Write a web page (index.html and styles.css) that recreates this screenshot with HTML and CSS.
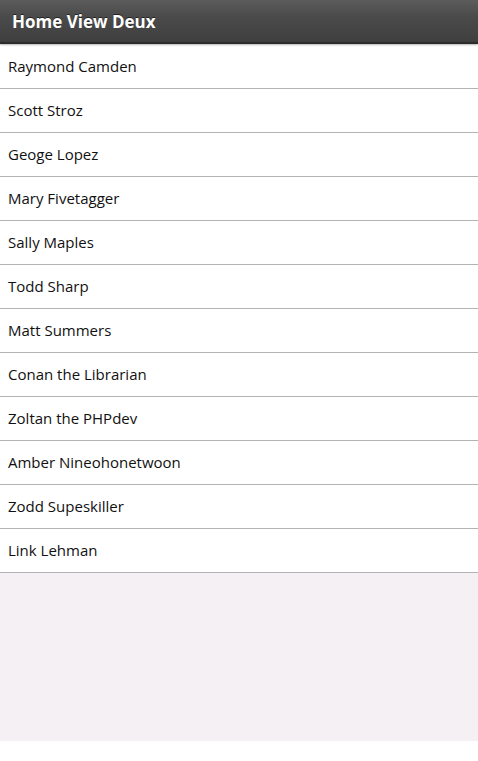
FILE: index.html
```html
<!DOCTYPE html>
<html>
<head>
<meta charset="utf-8">
<link rel="stylesheet" href="styles.css">
</head>
<body>
<div class="page">
  <header class="bar"><h1 class="title">Home View Deux</h1></header>
  <ul class="list">
    <li class="item">Raymond Camden</li>
    <li class="item">Scott Stroz</li>
    <li class="item">Geoge Lopez</li>
    <li class="item">Mary Fivetagger</li>
    <li class="item">Sally Maples</li>
    <li class="item">Todd Sharp</li>
    <li class="item">Matt Summers</li>
    <li class="item">Conan the Librarian</li>
    <li class="item">Zoltan the PHPdev</li>
    <li class="item">Amber Nineohonetwoon</li>
    <li class="item">Zodd Supeskiller</li>
    <li class="item">Link Lehman</li>
  </ul>
</div>
</body>
</html>
```
FILE: styles.css
```css
html, body {
  margin: 0;
  padding: 0;
  background: #ffffff;
}
.page {
  height: 741px;
  background: #f5f0f3;
  font-family: "Open Sans", "DejaVu Sans", sans-serif;
}
.bar {
  height: 42px;
  background: linear-gradient(#5c5c5c 0%, #4a4a4a 40%, #3f3f3f 100%);
  border-bottom: 2px solid #2b2b2b;
  box-shadow: 0 1px 2px rgba(0,0,0,0.25);
  display: flex;
  align-items: center;
  padding-left: 12px;
  position: relative;
  z-index: 1;
}
.title {
  margin: 0;
  color: #ffffff;
  font-size: 17px;
  font-weight: 700;
  text-shadow: 0 -1px 0 #222;
}
.list {
  list-style: none;
  margin: 1px 0 0 0;
  padding: 0;
}
.item {
  height: 43px;
  line-height: 43px;
  background: #ffffff;
  border-bottom: 1px solid #b3b3b3;
  padding-left: 8px;
  font-size: 15px;
  color: #111111;
}
```
